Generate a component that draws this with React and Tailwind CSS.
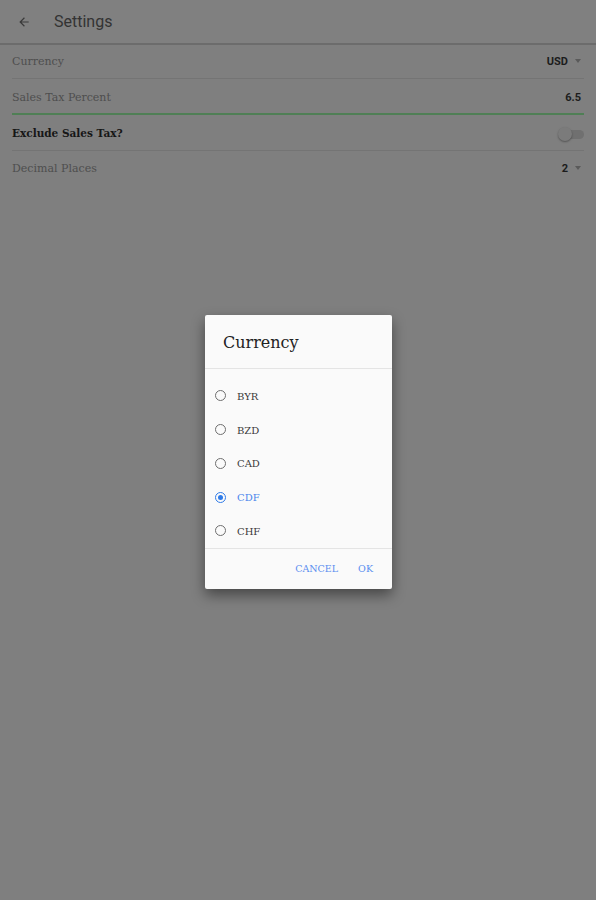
import React from 'react';

const serif = { fontFamily: '"DejaVu Serif", "Liberation Serif", serif' };

const options = ['BYR', 'BZD', 'CAD', 'CDF', 'CHF'];

const Caret = () => (
    <span className="inline-block w-0 h-0 border-l-[3.5px] border-r-[3.5px] border-t-[4px] border-l-transparent border-r-transparent border-t-[#5a5a5a] ml-[7px] mb-[2px]" />
);

const App = () => {
    return (
        <div className="w-[596px] h-[900px] bg-[#7f7f7f] relative overflow-hidden" style={{ fontFamily: 'Roboto, "Liberation Sans", sans-serif' }}>
            {/* Header */}
            <div className="h-[45px] flex items-center border-b-2 border-[#6c6c6c] bg-[#808080]">
                <svg width="14" height="14" viewBox="0 0 24 24" className="ml-[17px]" fill="#3a3a3a">
                    <path d="M20 11H7.83l5.59-5.59L12 4l-8 8 8 8 1.41-1.41L7.83 13H20v-2z" />
                </svg>
                <span className="ml-[23px] text-[16px] text-[#333]">Settings</span>
            </div>

            {/* Settings list */}
            <div>
                <div className="h-[34px] mx-3 pt-[1px] flex items-center justify-between border-b border-[#747474]">
                    <span className="text-[11px] text-[#4e4e4e]" style={serif}>Currency</span>
                    <div className="flex items-center text-[11px] font-bold text-[#1c1c1c] mr-[3px]">
                        USD<Caret />
                    </div>
                </div>
                <div className="h-[36px] mx-3 pt-[4px] flex items-center justify-between border-b-2 border-[#4f7f55]">
                    <span className="text-[11px] text-[#4e4e4e]" style={serif}>Sales Tax Percent</span>
                    <span className="text-[11px] font-bold text-[#1c1c1c] mr-[3px]">6.5</span>
                </div>
                <div className="h-[36px] mx-3 pt-[2px] flex items-center justify-between border-b border-[#747474]">
                    <span className="text-[10.5px] font-bold text-[#161616]" style={serif}>Exclude Sales Tax?</span>
                    <div className="relative w-[28px] h-[14px] mr-[-2px]">
                        <div className="absolute left-[2px] right-[2px] top-[3px] h-[9px] rounded-full bg-[#707070]" />
                        <div className="absolute left-0 top-0 w-[14px] h-[14px] rounded-full bg-[#7b7b7b] shadow-[0_1px_2px_rgba(0,0,0,0.35)]" />
                    </div>
                </div>
                <div className="h-[35px] mx-3 pt-[1px] flex items-center justify-between">
                    <span className="text-[11px] text-[#4e4e4e]" style={serif}>Decimal Places</span>
                    <div className="flex items-center text-[11px] font-bold text-[#1c1c1c] mr-[3px]">
                        2<Caret />
                    </div>
                </div>
            </div>

            {/* Dialog */}
            <div className="absolute left-[205px] top-[315px] w-[187px] h-[274px] bg-[#fafafa] rounded-[2px] shadow-[0_6px_14px_rgba(0,0,0,0.45)] flex flex-col">
                <div className="h-[54px] shrink-0 pt-[3px] flex items-center px-[18px] border-b border-[#e4e4e4]">
                    <span className="text-[16px] text-[#222]" style={serif}>Currency</span>
                </div>
                <div className="pt-[10px] shrink-0 flex flex-col border-b border-[#e4e4e4]">
                    {options.map((o) => {
                        const sel = o === 'CDF';
                        return (
                            <div key={o} className="h-[33.75px] shrink-0 flex items-center pl-[10px]">
                                <div
                                    className={`w-[11px] h-[11px] rounded-full border-[1.5px] flex items-center justify-center ${sel ? 'border-[#2f7be8]' : 'border-[#6e6e6e]'}`}
                                >
                                    {sel && <div className="w-[5px] h-[5px] rounded-full bg-[#2f7be8]" />}
                                </div>
                                <span
                                    className={`ml-[11px] text-[10px] pt-[1px] ${sel ? 'text-[#4a86ec]' : 'text-[#3a3a3a]'}`}
                                    style={serif}
                                >
                                    {o}
                                </span>
                            </div>
                        );
                    })}
                </div>
                <div className="flex-1 flex items-center justify-end pr-[19px] gap-[20px]">
                    <span className="text-[9.5px] text-[#5b8ef0]" style={serif}>CANCEL</span>
                    <span className="text-[9.5px] text-[#5b8ef0]" style={serif}>OK</span>
                </div>
            </div>
        </div>
    );
};

export default App;
